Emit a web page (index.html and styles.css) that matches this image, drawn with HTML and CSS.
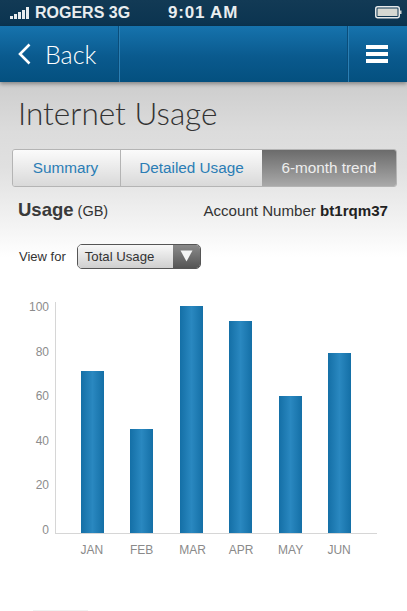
FILE: index.html
```html
<!DOCTYPE html>
<html lang="en">
<head>
<meta charset="utf-8">
<title>Internet Usage</title>
<link rel="stylesheet" href="styles.css">
</head>
<body>
<div class="status">
  <svg class="signal" width="25" height="14" viewBox="0 0 25 14"><rect x="5" y="10" width="3" height="3"/><rect x="9" y="8" width="3" height="5"/><rect x="13" y="6" width="3" height="7"/><rect x="17" y="4" width="3" height="9"/><rect x="21" y="1" width="3" height="12"/></svg>
  <span class="carrier">ROGERS 3G</span>
  <span class="clock">9:01 AM</span>
  <svg class="battery" width="27" height="13" viewBox="0 0 27 13"><rect x="0.75" y="0.75" width="23.5" height="11" rx="2" fill="none" stroke="#e6e9ea" stroke-width="1.5"/><rect x="2.5" y="2.5" width="20" height="7.5" fill="#d5d8d2"/><rect x="25" y="4.5" width="1.5" height="3.5" fill="#cfd3d4"/></svg>
</div>
<header class="nav">
  <div class="nav-back">
    <svg class="chev" width="15" height="24" viewBox="0 0 15 24"><path d="M12.5 2.5 L3 12 L12.5 21.5" fill="none" stroke="#fff" stroke-width="2.6"/></svg>
    <span>Back</span>
  </div>
  <div class="nav-menu"><span></span><span></span><span></span></div>
</header>
<main class="content">
  <h1 class="title">Internet Usage</h1>
  <div class="tabs">
    <div class="tab tab-summary">Summary</div>
    <div class="tab tab-detail">Detailed Usage</div>
    <div class="tab tab-active">6-month trend</div>
  </div>
  <div class="usage-row">
    <div class="usage"><strong>Usage</strong> (GB)</div>
    <div class="account">Account Number <b>bt1rqm37</b></div>
  </div>
  <div class="view-row">
    <span class="view-label">View for</span>
    <div class="select">
      <span class="select-value">Total Usage</span>
      <span class="select-btn"><svg width="13" height="12" viewBox="0 0 13 12"><path d="M0.5 0.5 H12.5 L6.5 11.5 Z" fill="#f4f5f5"/></svg></span>
    </div>
  </div>
  <div class="chart">
    <div class="y-axis"><span>100</span><span>80</span><span>60</span><span>40</span><span>20</span><span>0</span></div>
    <div class="chart-main">
      <div class="plot">
        <div class="bar" style="height:162px"></div>
        <div class="bar" style="height:104px"></div>
        <div class="bar" style="height:227px"></div>
        <div class="bar" style="height:212px"></div>
        <div class="bar" style="height:137px"></div>
        <div class="bar" style="height:180px"></div>
      </div>
      <div class="x-axis"><span>JAN</span><span>FEB</span><span>MAR</span><span>APR</span><span>MAY</span><span>JUN</span></div>
    </div>
  </div>
  <div class="page-edge"></div>
</main>
</body>
</html>
```
FILE: styles.css
```css
* { box-sizing: border-box; }
html, body { margin: 0; padding: 0; }
body {
  width: 407px;
  height: 611px;
  overflow: hidden;
  background: #fff;
  font-family: "Liberation Sans", Arial, sans-serif;
}
.status {
  height: 26px;
  display: flex;
  align-items: center;
  padding: 0 5px 1px 5px;
  background: linear-gradient(#123a55, #0b3450);
  color: #e9edef;
  font-weight: 700;
  font-size: 16px;
}
.signal { fill: #e9edef; flex: none; margin-right: 5px; }
.carrier { width: 133px; }
.clock { flex: 1; font-size: 17px; letter-spacing: 0.8px; }
.nav {
  height: 56px;
  display: flex;
  justify-content: space-between;
  background: linear-gradient(#1673ad, #0a5a8e 55%, #04507f);
  box-shadow: 0 2px 4px rgba(0, 0, 0, 0.35);
  position: relative;
}
.nav-back {
  width: 119px;
  display: flex;
  align-items: center;
  padding-left: 17px;
  gap: 13px;
  border-right: 1px solid #0a4d7a;
  box-shadow: 1px 0 0 #2a7fb4;
  color: #fff;
  font-family: "Lato", sans-serif;
  font-weight: 300;
  font-size: 25px;
}
.chev { flex: none; }
.nav-menu {
  width: 60px;
  margin-right: 0;
  flex: 0 0 60px;
  display: flex;
  flex-direction: column;
  justify-content: center;
  gap: 3px;
  padding: 0 0 0 18px;
  border-left: 1px solid #0a4d7a;
  box-shadow: inset 1px 0 0 #2a7fb4;
}
.nav-menu span { height: 4px; background: #fff; display: block; width: 22px; }
.content {
  padding: 0 10px 0 12px;
  background: linear-gradient(#cdcdcd, #dcdcdc 50px, #e0e0e0 85px, #f4f4f4 145px, #fff 175px);
  height: 529px;
}
.title {
  margin: 0;
  padding: 11px 0 0 6px;
  height: 67px;
  font-family: "Lato", sans-serif;
  font-weight: 300;
  font-size: 31.5px;
  line-height: 40px;
  color: #333;
}
.tabs {
  display: flex;
  height: 38px;
  border: 1px solid #b4b4b4;
  border-radius: 3px;
  overflow: hidden;
  font-size: 15.3px;
}
.tab {
  display: flex;
  align-items: center;
  justify-content: center;
  color: #2b7db5;
  background: linear-gradient(#fbfbfb, #d9d9d9);
}
.tab-summary { width: 108px; border-right: 1px solid #b4b4b4; padding-right: 2px; }
.tab-detail { width: 141px; }
.tab-active {
  flex: 1;
  color: #eee;
  background: linear-gradient(#6b6b6b, #a9a9a9);
}
.usage-row {
  display: flex;
  justify-content: space-between;
  align-items: baseline;
  padding: 12px 9px 0 6px;
  height: 56px;
  color: #333;
  font-size: 15.1px;
}
.usage { font-size: 14.5px; }
.usage strong { font-size: 18.5px; color: #3a3a3a; }
.account b { color: #222; }
.view-row {
  display: flex;
  align-items: center;
  gap: 11px;
  padding-left: 7px;
  height: 26px;
}
.view-label { font-size: 13px; color: #333; }
.select {
  width: 124px;
  height: 25px;
  display: flex;
  border: 1px solid #555;
  border-radius: 5px;
  overflow: hidden;
  font-size: 13.2px;
  color: #333;
}
.select-value {
  flex: 1;
  display: flex;
  align-items: center;
  padding-left: 7px;
  background: linear-gradient(#f8f8f8, #cfcfcf);
}
.select-btn {
  width: 27px;
  display: flex;
  align-items: center;
  justify-content: center;
  background: linear-gradient(#8a8a8a, #555);
}
.chart {
  display: flex;
  margin-top: 33px;
  height: 270px;
}
.y-axis {
  width: 37px;
  height: 237px;
  margin-top: -2px;
  display: flex;
  flex-direction: column;
  justify-content: space-between;
  align-items: flex-end;
  font-size: 12px;
  line-height: 14px;
  color: #8c8c8c;
}
.chart-main { margin-left: 6px; width: 322px; }
.plot {
  height: 232px;
  display: flex;
  align-items: flex-end;
  gap: 26.4px;
  padding-left: 25px;
  border-left: 1px solid #d6d6d6;
  border-bottom: 1px solid #d6d6d6;
}
.bar {
  width: 23px;
  background: linear-gradient(90deg, #146fa6, #2a88c0 50%, #146fa6);
}
.x-axis {
  display: flex;
  padding-left: 25.5px;
  margin-top: 9px;
  font-size: 12px;
  line-height: 14px;
  color: #8a8a8a;
}
.x-axis span { width: 49.4px; }
.page-edge {
  width: 55px;
  height: 1px;
  margin: 38px 0 0 21px;
  background: #f1f1f1;
}
```
